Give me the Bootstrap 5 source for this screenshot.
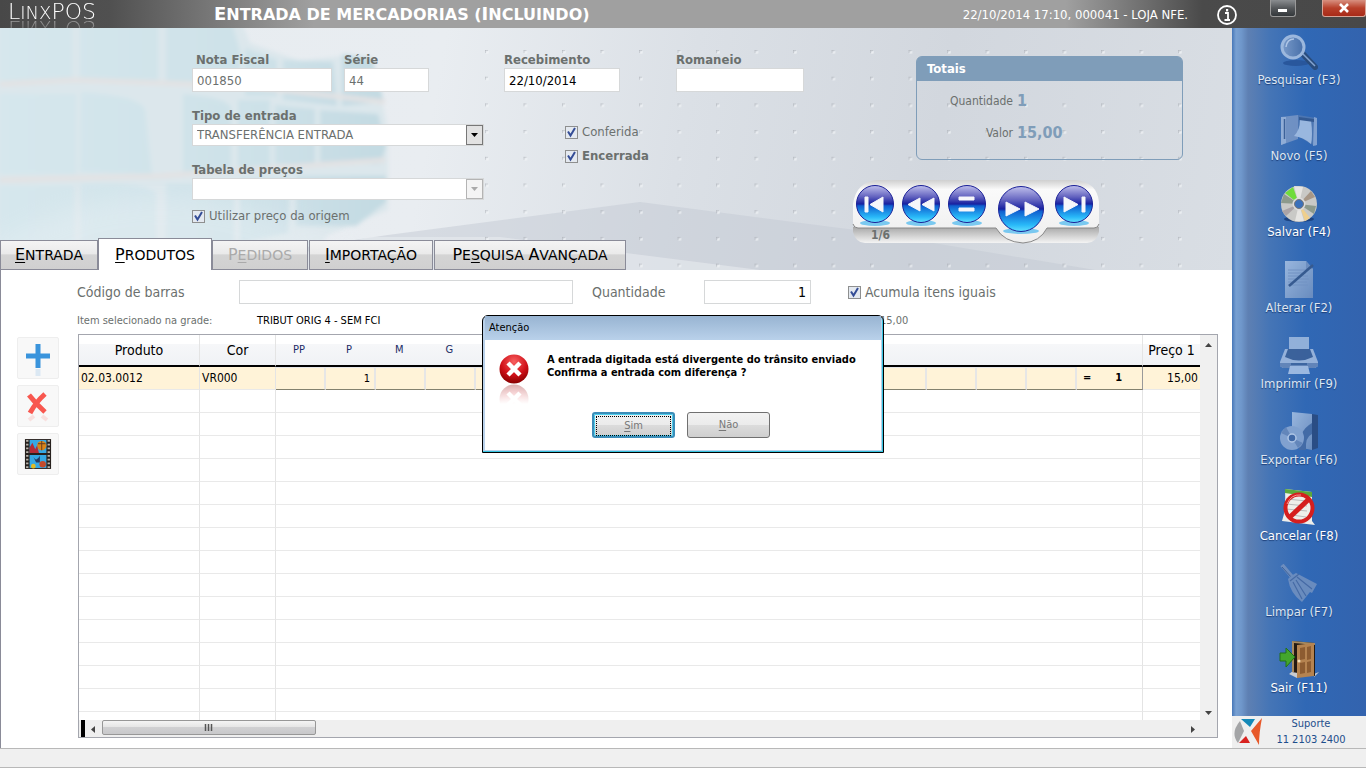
<!DOCTYPE html>
<html lang="pt-BR">
<head>
<meta charset="utf-8">
<meta name="viewport" content="width=device-width, initial-scale=1">
<title>LinxPOS - Entrada de mercadorias</title>
<link rel="stylesheet" href="https://cdn.jsdelivr.net/npm/bootstrap@5.3.0/dist/css/bootstrap.min.css">
<style>
  body{font-family:"DejaVu Sans Condensed","Noto Sans",sans-serif;font-size:13px;line-height:16px;color:#6b706e;background:#fff}
  button{font-family:inherit}
  .caps{font-family:"DejaVu Sans",sans-serif;text-transform:uppercase}
  .topbar{height:28px;color:#fff;background:linear-gradient(90deg,#484848 0,#505050 8%,#a0a0a0 23%,#a0a0a0 78%,#4a4a4a 88%,#484848 100%)}
  .brand{width:206px;padding-left:8px;height:28px;overflow:hidden}
  .brand .word{font-family:"DejaVu Sans",sans-serif;font-weight:200;font-size:18px;line-height:24px;height:22px;display:inline-block;-webkit-box-reflect:below -4px linear-gradient(transparent,rgba(255,255,255,.5))}
  .brand .word span{font-size:22px}
  .screen-title{font-size:16px;line-height:28px;font-weight:bold}
  .screen-title span{font-size:18px}
  .winbtn{height:17px;border:1px solid #999;border-top:0;border-radius:0 0 3px 3px;padding:0}
  .win-min{width:26px;background:linear-gradient(#8a8d90,#55585b 50%,#33373a)}
  .win-close{width:44px;margin-left:26px;background:linear-gradient(#d89080,#b8402a 50%,#a82a18);border-color:#d8a598}
  .head{background:linear-gradient(100deg,#e6ecf0 0,#e9edf1 35%,#dbe0e6 55%,#d2d7de 75%,#d9dee4 100%);min-height:242px;overflow:hidden}
  .head-art{position:absolute;inset:0;width:100%;height:100%}
  .head-form{padding:24px 49px 0 192px}
  .lbl{font-weight:bold;line-height:16px;display:block}
  .field{border:1px solid #d6d8d9;border-radius:0;background-color:#fff;height:24px;padding:0 4px;font-size:13px;color:#6b706e;display:block;min-width:0}
  .dark{color:#000}
  .w-292{width:292px}.w-140{width:140px}.w-85{width:85px}.w-116{width:116px}.w-128{width:128px}
  select.field{appearance:none;height:22px;width:100%;opacity:1;background-repeat:no-repeat;background-position:right 0 center;background-image:url("data:image/svg+xml,%3Csvg xmlns='http://www.w3.org/2000/svg' width='17' height='20'%3E%3Crect x='.5' y='.5' width='16' height='19' fill='%23e2e2e2' stroke='%23777'/%3E%3Cpath d='M5 8h7l-3.500 4z' fill='%23000'/%3E%3C/svg%3E")}
  select.field:disabled{background-image:url("data:image/svg+xml,%3Csvg xmlns='http://www.w3.org/2000/svg' width='17' height='20'%3E%3Crect x='.5' y='.5' width='16' height='19' fill='%23f4f4f4' stroke='%23b4b4b4'/%3E%3Cpath d='M5 8h7l-3.500 4z' fill='%23aaa'/%3E%3C/svg%3E")}
  .tick{appearance:none;width:13px;height:13px;margin:0;flex:none;border:1px solid #8e8f8f;background:#eef1f5}
  .tick:checked{background:#e4e9f0 url("data:image/svg+xml,%3Csvg xmlns='http://www.w3.org/2000/svg' viewBox='0 0 11 11'%3E%3Cpath d='M2 4.500l2.500 4L9 1' fill='none' stroke='%23344d96' stroke-width='2'/%3E%3C/svg%3E")}
  .flags{padding:32px 0 0 61px}
  .totals{width:267px;height:104px;border:1px solid #7f9db9;border-radius:6px}
  .totals h2{font-size:13px;line-height:24px;margin:0;padding-left:10px;background:#7f9db9;color:#fff;font-weight:bold;border-radius:4px 4px 0 0}
  .totals dt{font-weight:normal;font-size:12px;width:96px;text-align:right}
  .totals dd{margin:0;color:#7f9db9;font-weight:bold;font-size:16px}
  .player{width:246px;height:56px;margin:20px 84px 0 0}
  .player svg{overflow:visible}
  .player .pos{position:absolute;left:18px;top:47px;font-weight:bold;font-size:12px}
  .tabs{min-height:32px}
  .tabs button{border:1px solid #8a8b98;height:30px;padding:0;color:#000;font-size:14px;line-height:28px;text-transform:uppercase;background:linear-gradient(#f4f4f4,#eaeaea 45%,#d4d4d4 50%,#d0d0d0);margin-right:1px;white-space:nowrap}
  .tabs button.active{height:32px;border-bottom:0;background:#fff;margin:0}
  .tabs button:disabled{color:#aaa}
  .tabs .ini{font-size:16px}
  .tabs .t1{width:98px;margin:0}.tabs .t2{width:114px}.tabs .t3{width:96px}.tabs .t4{width:124px}.tabs .t5{width:192px}
  u{text-underline-offset:2px}
  .panel{border-left:1px solid #8a8b98;padding:10px 14px 10px 16px}
  .panel .big{font-size:14px;line-height:24px}
  .scan{padding-left:60px}
  .lab-cod{width:162px}
  .in-cod{flex:1 1 334px;max-width:334px}
  .lab-qtd{width:131px;padding-left:19px}
  .in-qtd{width:107px}
  .lab-acu{margin-left:37px}
  .itemrow{padding-left:60px;font-size:11px;line-height:14px;height:30px}
  .it-a{width:180px}
  .it-b{width:623px}
  .tools{width:42px;gap:6px;padding-top:3px}
  .tools button{width:42px;height:42px;border:1px solid #eee;background:#f8f8f8;padding:0;border-radius:2px}
  .gridbox{border:1px solid #a4a6ae;min-width:0;margin-left:19px}
  .gridrows{overflow:hidden;min-width:0;height:385px}
  .items{table-layout:fixed;width:100%;border-collapse:separate;border-spacing:0;color:#000}
  .items th{height:32px;font-weight:normal;text-align:center;padding:0;border-bottom:2px solid #000;background:linear-gradient(#fff 30%,#f6f7f9 31%,#f0f2f5);font-size:14px}
  .items th.sz{font-size:11px;color:#1c2c66;padding-right:4px}
  .items .rb{border-right:1px solid #e4e4e4}
  .items td{height:23px;padding:0 2px;border-bottom:1px solid #e9e9e9;line-height:20px;font-size:12px}
  .items .sel td{background:#fff3d8}
  .items .sel .sz{border:1px solid #e6e6e6;border-width:1px 2px 1px 0;border-bottom-color:#83816f;text-align:right;font-size:11px;padding-right:4px}
  .items .sel .tot{border-bottom-color:#83816f;border-right:1px solid #999;font-weight:bold;font-size:11px}
  .vbar{width:17px;background:#f0f0f0}
  .vbar,.hbar{flex:none}
  .hbar{height:17px;padding-left:2px;background:#efefef}
  .marker{width:4px}
  .bar-btn{border:0;background:none;padding:0;width:17px;height:17px;line-height:1}
  .thumb{width:214px;height:15px;border:1px solid #979797;border-radius:2px;background:linear-gradient(#f4f4f4,#e6e6e6 45%,#d0d0d2 50%,#c8c8ca);padding:0}
  .grow0{min-width:0}
  .side{width:134px;background:linear-gradient(90deg,#4777b8 0,#78a0d2 3%,#6f97cb 7%,#5e80b3 12%,#4575b6 28%,#3068b5 55%,#3363ae 100%);padding-top:4px}
  .side button{width:100%;height:76px;border:0;background:none;color:#fff;padding:0;line-height:18px;text-shadow:0 1px 1px #1c3e78;display:flex;flex-direction:column;align-items:center}
  .side svg{margin-bottom:1px}
  .side .off{color:#dde6f2}
  .side .off svg{opacity:.9}
  .support{height:32px;background:#efefef;color:#1e4e8c;font-size:11px;line-height:16px}
  .status{height:20px;background:#f0f0f0;border-top:1px solid #b8b8b8;border-bottom:1px solid #b8b8b8}
  .layer{position:fixed;inset:0;z-index:10}
  .msg{width:402px;height:138px;border:1px solid #000;border-radius:6px 6px 0 0;background:#b9d1ea;padding:0 2px 2px;color:#000;box-shadow:inset -1px -1px #35c3e0}
  .msg h1{font-size:11px;line-height:24px;margin:0;padding-left:4px;background:linear-gradient(#98b4d2,#b9d1ea);font-weight:normal}
  .msg p{font-size:11px;line-height:13px;font-weight:bold;margin:0}
  .msg-body{background:#fff;height:110px;padding:13px 14px 0 14px}
  .dlg{width:83px;height:26px;border:1px solid #707070;border-radius:3px;background:linear-gradient(#f2f2f2,#ebebeb 48%,#dcdcdc 50%,#cfcfcf);color:#777;font-size:11px;padding:2px}
  .dlg.first{border:2px solid #3c8db8;box-shadow:inset 0 0 0 1px #4fd0ee}
  .dlg.first span{display:block;border:1px dotted #000;line-height:18px}
</style>
</head>
<body class="d-flex flex-column min-vh-100">
<svg width="0" height="0" class="position-absolute" aria-hidden="true">
  <defs>
    <linearGradient id="orb" x2="0" y2="1"><stop offset="0" stop-color="#c0c0ec"/><stop offset=".3" stop-color="#6464c0"/><stop offset=".5" stop-color="#1820a0"/><stop offset=".55" stop-color="#1060d0"/><stop offset=".85" stop-color="#28b8f8"/><stop offset="1" stop-color="#60e0ff"/></linearGradient>
    <linearGradient id="pale" x2="1" y2="1"><stop offset="0" stop-color="#a3bee2"/><stop offset="1" stop-color="#6f90c0"/></linearGradient>
    <linearGradient id="deep" x2="1"><stop offset="0" stop-color="#7f9fcc"/><stop offset="1" stop-color="#4a70a8"/></linearGradient>
    <radialGradient id="red" cy=".25" r=".75"><stop offset="0" stop-color="#f86060"/><stop offset=".6" stop-color="#d01018"/><stop offset="1" stop-color="#800"/></radialGradient>
    <linearGradient id="fade" x2="0" y2="1"><stop offset="0" stop-color="#fff" stop-opacity=".2"/><stop offset="1" stop-color="#fff"/></linearGradient>
  </defs>
</svg>

<header class="topbar d-flex">
  <div class="brand"><span class="word caps"><span>L</span>inx<span>POS</span></span></div>
  <div class="screen-title caps px-2 flex-grow-1 text-nowrap"><span>E</span>ntrada de mercadorias (<span>I</span>ncluindo)</div>
  <div class="d-flex flex-shrink-0">
    <span class="pt-1 mt-1 me-4 lh-1">22/10/2014 17:10, 000041 - LOJA NFE.</span>
    <button type="button" class="btn p-0 border-0 lh-1 ms-1 me-4" aria-label="Informações"><svg class="d-block" width="22" height="26" viewBox="0 0 22 26"><circle cx="11" cy="14" r="9" fill="none" stroke="#fff" stroke-width="1.800"/><path d="M9 12h3v7M8.500 19h5.500" stroke="#fff" stroke-width="1.800" fill="none"/><rect x="10" y="8" width="2.200" height="2.400" fill="#fff"/></svg></button>
    <button type="button" class="winbtn win-min ms-2" aria-label="Minimizar"><svg class="d-block mx-auto" width="10" height="14"><rect y="8" width="9" height="3" fill="#fff"/></svg></button>
    <button type="button" class="winbtn win-close" aria-label="Fechar"><svg class="d-block mx-auto" width="12" height="14" viewBox="0 0 12 14"><path d="M2 3l8 8M10 3l-8 8" stroke="#fff" stroke-width="2.600"/></svg></button>
  </div>
</header>

<div class="d-flex flex-grow-1">
<main class="flex-grow-1 d-flex flex-column grow0">
  <section class="head position-relative d-flex flex-column">
    <svg class="head-art" viewBox="0 0 1232 242" preserveAspectRatio="none" aria-hidden="true">
      <defs>
        <pattern id="dots" x="485" y="22" width="38.500" height="26.700" patternUnits="userSpaceOnUse"><path d="M0 3V0h3" stroke="#b0b4ba" fill="none"/><path d="M1 3h2V1" stroke="#f3f5f7" fill="none"/></pattern>
        <linearGradient id="cube" x2="1"><stop offset="0" stop-color="#d6e7ed"/><stop offset=".7" stop-color="#cde1e8"/><stop offset="1" stop-color="#c3dae2"/></linearGradient>
        <filter id="soft"><feGaussianBlur stdDeviation="2"/></filter>
        <filter id="softer"><feGaussianBlur stdDeviation="12"/></filter>
      </defs>
      <g filter="url(#soft)">
        <path d="M-10-10H240l10 25 50 18 50-6 28 25 10 50v80l-60 25-30 40H-10z" fill="#dce7ec"/>
        <g fill="url(#cube)">
          <path d="M0-5h72v58H0zM80-5h78v62l-78-3zM166-5h66l8 28v32h-74zM245 20l32 12v36h-32zM283 32l50 2 4 44-54-6zM342 26l30 4 12 44-42 4z"/>
          <path d="M0 66h76v80H0zM81 64q60 4 64 18l7 64-72-2zM183 66q46 4 48 14v64h-48zM238 72h32v72h-32zM275 77l40 4v55h-40zM320 82l58 4 8 32-6 18h-60z"/>
          <path d="M0 158h74v86H0zM81 156q70-2 75 10v76H81zM166 156h68v58l-12 28h-56zM240 150h50l-2 55-48 10zM296 148h90v26l-30 24h-60z"/>
        </g>
        <path d="M0 56l75-4 170 6 140 16M0 152l160-4 225-16" stroke="#e3e2e3" stroke-width="5" fill="none"/>
      </g>
      <path d="M-20 225Q150 110 360 225L300 262H-20z" fill="#f2f5f8" opacity=".3" filter="url(#softer)"/>
      <path d="M300 220l88-13 252-33 215 28 240 40H280z" fill="#c3cad3" opacity=".5"/>
      <path d="M370 209h130l260 33H230z" fill="#e9edf1" opacity=".55"/>
      <rect x="480" y="18" width="715" height="224" fill="url(#dots)"/>
    </svg>
    <div class="head-form position-relative d-flex flex-grow-1">
      <div class="w-292 flex-shrink-0">
        <div class="d-flex gap-2">
          <div class="me-1"><label class="lbl ps-1" for="nf">Nota Fiscal</label><input id="nf" class="field w-140" value="001850"></div>
          <div><label class="lbl" for="serie">Série</label><input id="serie" class="field w-85" value="44"></div>
        </div>
        <label class="lbl pt-3" for="tipo">Tipo de entrada</label>
        <select id="tipo" class="field"><option>TRANSFERÊNCIA ENTRADA</option></select>
        <label class="lbl pt-3" for="tabela">Tabela de preços</label>
        <select id="tabela" class="field" disabled><option></option></select>
        <label class="d-flex align-items-center gap-1 pt-2"><input type="checkbox" class="tick" checked>Utilizar preço da origem</label>
      </div>
      <div class="ms-3 ps-1 flex-shrink-0">
        <div class="d-flex gap-5">
          <div class="me-2"><label class="lbl" for="receb">Recebimento</label><input id="receb" class="field w-116 dark" value="22/10/2014"></div>
          <div><label class="lbl" for="rom">Romaneio</label><input id="rom" class="field w-128"></div>
        </div>
        <div class="flags d-flex flex-column gap-2">
          <label class="d-flex align-items-center gap-1"><input type="checkbox" class="tick" checked>Conferida</label>
          <label class="d-flex align-items-center gap-1 fw-bold"><input type="checkbox" class="tick" checked>Encerrada</label>
        </div>
      </div>
      <div class="ms-auto d-flex flex-column align-items-end pt-1">
        <section class="totals">
          <h2>Totais</h2>
          <dl class="m-0 pt-2 mt-1">
            <div class="d-flex gap-1 mb-3"><dt>Quantidade</dt><dd>1</dd></div>
            <div class="d-flex gap-1"><dt>Valor</dt><dd>15,00</dd></div>
          </dl>
        </section>
        <nav class="player position-relative" aria-label="Navegação">
          <svg class="d-block" width="246" height="56" viewBox="0 0 246 56">
            <defs><linearGradient id="shell" x2="0" y2="1"><stop offset="0" stop-color="#cfcfcf"/><stop offset=".15" stop-color="#fafafa"/><stop offset="1" stop-color="#eee"/></linearGradient>
            <linearGradient id="tray" x2="0" y2="1"><stop offset="0" stop-color="#a8a8a8"/><stop offset="1" stop-color="#f4f4f4"/></linearGradient></defs>
            <path d="M0 47h246v5q-3 11-12 11H12Q3 63 0 52z" fill="url(#tray)"/>
            <path d="M24 0h198q22 2 24 22v20q0 6-5 6h-47q-7 14-24 15-19-1-27-15H5q-5 0-5-6V24Q3 2 24 0z" fill="url(#shell)"/>
            <path d="M0 44q1 4 5 4h138q8 14 27 15 17-1 24-15h47q4 0 5-4" fill="none" stroke="#888"/>
            <g fill="#48b8f0" opacity=".7"><ellipse cx="22" cy="43" rx="15" ry="3"/><ellipse cx="68" cy="43" rx="15" ry="3"/><ellipse cx="114" cy="43" rx="15" ry="3"/><ellipse cx="168" cy="51" rx="18" ry="3"/><ellipse cx="221" cy="43" rx="15" ry="3"/></g>
            <g fill="url(#orb)" stroke="#1a2098"><circle cx="22" cy="24" r="18.500"/><circle cx="68" cy="24" r="18.500"/><circle cx="114" cy="24" r="18.500"/><circle cx="168" cy="29" r="22.500"/><circle cx="221" cy="24" r="18.500"/></g>
            <g fill="#f6f6fa" stroke="#f6f6fa" stroke-linejoin="round"><path d="M12 17h3v15h-3zM30 17v15l-13-7.500zM67 18v13l-12-6.500zM81 18v13l-12-6.500zM106 17h15v3h-15zM106 28h15v3h-15zM153 22v14l14-7zM172 22v14l14-7zM211 17v15l14-7.500zM229 17h3v15h-3z"/></g>
          </svg>
          <span class="pos">1/6</span>
        </nav>
      </div>
    </div>
    <div class="tabs caps d-flex align-items-end position-relative">
      <button type="button" class="t1"><u class="ini">E</u>ntrada</button><button type="button" class="t2 active"><u class="ini">P</u>rodutos</button><button type="button" class="t3" disabled><span class="ini">P</span><u>e</u>didos</button><button type="button" class="t4"><u class="ini">I</u>mportação</button><button type="button" class="t5"><span class="ini">P</span>e<u>s</u>quisa <span class="ini">A</span>vançada</button>
    </div>
  </section>

  <section class="panel flex-grow-1 d-flex flex-column">
    <div class="scan big d-flex align-items-center">
      <label for="cod" class="lab-cod">Código de barras</label>
      <input id="cod" class="field big in-cod">
      <label for="qtd" class="lab-qtd">Quantidade</label>
      <input id="qtd" class="field big in-qtd dark text-end" value="1">
      <label class="lab-acu d-flex align-items-center gap-1"><input type="checkbox" class="tick" checked>Acumula itens iguais</label>
    </div>
    <div class="itemrow d-flex align-items-center pt-1">
      <span class="it-a">Item selecionado na grade:</span><span class="it-b dark">TRIBUT ORIG 4 - SEM FCI</span><span>15,00</span>
    </div>
    <div class="d-flex flex-grow-1">
      <div class="tools d-flex flex-column flex-shrink-0">
        <button type="button" aria-label="Adicionar"><svg width="34" height="36" viewBox="0 0 34 36"><path d="M17 4v24M5 16h24" stroke="#3a94dc" stroke-width="5"/><path d="M17 29v7" stroke="#3a94dc" stroke-width="5" opacity=".15"/></svg></button>
        <button type="button" aria-label="Excluir"><svg width="34" height="36" viewBox="0 0 34 36"><path d="M8 7q7 9 16 17M24 6q-9 8-15 19" stroke="#f8574f" stroke-width="5" fill="none"/><path d="M8 32l5-4M21 28l5 4" stroke="#f8574f" stroke-width="4" opacity=".15"/></svg></button>
        <button type="button" aria-label="Foto"><svg width="28" height="34" viewBox="0 0 30 36"><path d="M1 2h28v32H1z" fill="#27211e"/><path d="M3.500 3v30M26.500 3v30" stroke="#b9b4ac" stroke-width="2.500" stroke-dasharray="2 2"/><path d="M6 3h18v14H6zM6 19h18v14H6z" fill="#35a8e4"/><circle cx="19" cy="9" r="5" fill="#d98519"/><path d="M19 4v10M15 7h8" stroke="#613b23"/><path d="M6 17v-6l3-5 3 7 2-4 2 8z" fill="#b42c36"/><path d="M9 19q4 9 8 1v7h-4z" fill="#283b5f"/><circle cx="10" cy="31" r="2.500" fill="#e0bc25"/><circle cx="20" cy="29" r="3.500" fill="#c34b2c"/></svg></button>
      </div>
      <div class="gridbox flex-grow-1 d-flex flex-column">
        <div class="d-flex flex-grow-1 grow0">
          <div class="gridrows flex-grow-1">
            <table class="items">
              <colgroup id="cols"></colgroup>
              <thead><tr id="headrow"></tr></thead>
              <tbody id="rows"></tbody>
            </table>
          </div>
          <div class="vbar d-flex flex-column justify-content-between">
            <button class="bar-btn" type="button" aria-label="Subir"><svg width="9" height="9"><path d="M1 7h7L4.500 3z" fill="#444"/></svg></button>
            <button class="bar-btn" type="button" aria-label="Descer"><svg width="9" height="9"><path d="M1 3h7L4.500 7z" fill="#444"/></svg></button>
          </div>
        </div>
        <div class="hbar d-flex">
          <span class="marker bg-black"></span>
          <button class="bar-btn" type="button" aria-label="Esquerda"><svg width="9" height="9"><path d="M6 1v7L2 4.500z" fill="#444"/></svg></button>
          <button class="thumb" type="button" aria-label="Rolagem"><svg class="d-block mx-auto" width="10" height="8"><path d="M1.500 0v7M4.500 0v7M7.500 0v7" stroke="#555" stroke-width="1.500"/></svg></button>
          <button class="bar-btn ms-auto me-3" type="button" aria-label="Direita"><svg width="9" height="9"><path d="M3 1v7L7 4.500z" fill="#444"/></svg></button>
        </div>
      </div>
    </div>
  </section>
</main>

<aside class="side flex-shrink-0 d-flex flex-column">
  <button type="button" class="off"><svg width="40" height="38" viewBox="0 0 40 38"><ellipse cx="17" cy="31" rx="13" ry="3" fill="#28559a"/><path d="M24 22l12 13" stroke="#294a78" stroke-width="6" stroke-linecap="round"/><path d="M24 22l12 12" stroke="#8eaad2" stroke-width="1.500"/><circle cx="14" cy="15" r="11" fill="url(#deep)" stroke="#a7c0e2" stroke-width="3"/><path d="M7 15q1-8 8-8" stroke="#bcd0ec" stroke-width="1.500" fill="none"/></svg>Pesquisar (F3)</button>
  <button type="button" class="off"><svg width="38" height="38" viewBox="0 0 38 38"><path d="M1 9l17-2v24L1 37z" fill="#7695c5"/><path d="M1 9h5v26l-5 2z" fill="#9ab4da"/><path d="M18 7l18 3v28l-5-2-13-8z" fill="#5078b2"/><path d="M34 9l3 1v27l-4 1z" fill="#8aa8d4"/><path d="M20 12h11q2 16 0 24-8-7-17-8 6-6 6-16z" fill="#a5c0e4"/><path d="M4.500 11v20" stroke="#3e6197" stroke-width="1.500"/><path d="M19 9l15 2v3l-15-2z" fill="#35598f"/></svg>Novo (F5)</button>
  <button type="button"><svg width="38" height="38" viewBox="0 0 38 38"><ellipse cx="19" cy="35" rx="15" ry="3" fill="#1d4482"/><circle cx="19" cy="20" r="18" fill="#c9c9c6"/><path d="M19 20L5 9l8-6z" fill="#6fdc3c"/><path d="M19 20L1 19 4 10zM19 20l17 2-2 8z" fill="#8d9a8c"/><path d="M19 20L31 7l4 6z" fill="#a79787"/><path d="M19 20l4-17-9-1zM19 20l-4 17h9z" fill="#e6e5e2"/><path d="M19 20l11 14-5 3z" fill="#efcf8d"/><path d="M19 20L2 27l4 5z" fill="#aaa3a6"/><circle cx="19" cy="20" r="6.500" fill="#dcdcdc"/><circle cx="19" cy="20" r="4.500" fill="#3b70ba" stroke="#777"/></svg>Salvar (F4)</button>
  <button type="button" class="off"><svg width="30" height="38" viewBox="0 0 30 38"><path d="M1 1h21l7 8v29H1z" fill="url(#pale)"/><path d="M22 1v8h7" fill="#7393c2"/><path d="M4 10h20M4 13h18M4 16h20M4 19h21M4 22h19M4 25h20" stroke="#7896c4"/><path d="M5 26L29 5" stroke="#37598c" stroke-width="2.500"/></svg>Alterar (F2)</button>
  <button type="button" class="off"><svg width="40" height="38" viewBox="0 0 40 38"><path d="M10 1h20v16H10z" fill="#9cb8de"/><path d="M6 13h28l5 13v4l-3 2H4l-3-2v-4z" fill="#9fb9de"/><path d="M9 13h22l3 8q-14 7-28 0z" fill="#3c6199"/><path d="M1 27h38v3l-3 2H4l-3-2z" fill="#6788ba"/><path d="M11 30h18l2 8H9z" fill="#a7c1e5"/><path d="M12 28h16" stroke="#3f669f" stroke-width="2"/></svg>Imprimir (F9)</button>
  <button type="button" class="off"><svg width="40" height="38" viewBox="0 0 40 38"><path d="M13 0l20 2v36l-20-4z" fill="url(#pale)"/><path d="M33 2l6 1v33l-6 2z" fill="#2a4b80"/><path d="M20 38Q19 19 33 11v11q-7 3-6 16z" fill="#466ca5"/><circle cx="13" cy="26" r="12" fill="#89a7d2"/><path d="M13 26L2 21l5-6zM13 26l6 10 5-5z" fill="#6889bb"/><circle cx="13" cy="26" r="4" fill="#4169a6" stroke="#bbcfeb" stroke-width="1.500"/></svg>Exportar (F6)</button>
  <button type="button"><svg width="38" height="38" viewBox="0 0 38 38"><path d="M5 1l27 3v29l3 4L2 33q4-10 3-32z" fill="#eeeeea"/><path d="M5 1l27 3v5L5 5z" fill="#5ca83c"/><path d="M6 11l21 2M6 16l21 2M6 21l21 2M5 26l21 3" stroke="#bbb"/><circle cx="19" cy="20" r="13.500" fill="none" stroke="#d51e1e" stroke-width="4"/><path d="M10 29L29 11" stroke="#d51e1e" stroke-width="5"/><path d="M7 16q4-10 14-9" stroke="#f79a91" fill="none"/></svg>Cancelar (F8)</button>
  <button type="button" class="off"><svg width="38" height="38" viewBox="0 0 38 38"><path d="M2 1l11 13" stroke="#7391bf" stroke-width="4"/><path d="M2 3l10 11" stroke="#3d5f95"/><path d="M11 12l5-3 21 11-5 9-2-1-8 10Q10 29 8 15z" fill="#7090c0"/><path d="M10 17l9-7M13 18l9 17M16 16l10 16M17 13l15 12" stroke="#486ba3" stroke-width="1.200"/></svg>Limpar (F7)</button>
  <button type="button"><svg width="40" height="38" viewBox="0 0 40 38"><path d="M10 34l8-6v10zM35 34l5-2-5 5z" fill="#c9cbd0"/><path d="M13 1l23 2v33l-23-4z" fill="#241a12"/><path d="M13 1l23 2v2L15 3v29h-2z" fill="#a88a60"/><path d="M18 5l17-2v33l-17 2z" fill="#b58350"/><path d="M21 8l5-1v12l-5 1zM28 7l4-1v13l-4 1zM21 23l5-1v11l-5 1zM28 22l4-1v11l-4 1z" fill="#8d5c31"/><circle cx="20" cy="21" r="1.500" fill="#f4e3bd"/><path d="M1 13h6V8l9 9-9 10v-6H1z" fill="#43a62c" stroke="#237116"/></svg>Sair (F11)</button>
  <div class="support d-flex mt-auto">
    <svg class="flex-shrink-0" width="32" height="32" viewBox="0 0 32 32"><path d="M9 3h14l-5 8z" fill="#1489b8"/><path d="M30 2L19 15l8 14q0-12 3-27z" fill="#e7592a"/><path d="M8 5Q-2 17 6 27l6-12z" fill="#a4a5a7"/><path d="M7 27l7-7 4 7z" fill="#d8221f"/></svg>
    <div class="flex-grow-1 text-center pe-2">Suporte<br>11 2103 2400</div>
  </div>
</aside>
</div>
<footer class="status"></footer>

<div class="layer d-flex align-items-center justify-content-center">
  <div class="msg" role="alertdialog" aria-labelledby="dlg-title">
    <h1 id="dlg-title">Atenção</h1>
    <div class="msg-body">
      <div class="d-flex gap-3">
        <svg class="flex-shrink-0" width="32" height="51" viewBox="0 0 32 51"><g id="err"><circle cx="15" cy="16" r="14.500" fill="url(#red)"/><path d="M9 10l12 12M21 10L9 22" stroke="#fff" stroke-width="4.500"/></g><use href="#err" transform="matrix(1 0 0 -1 0 62)" opacity=".4"/><path d="M0 31h32v20H0z" fill="url(#fade)"/></svg>
        <p>A entrada digitada está divergente do trânsito enviado<br>Confirma a entrada com diferença ?</p>
      </div>
      <div class="d-flex justify-content-center gap-2 mt-2 pe-1">
        <button type="button" class="dlg first me-1"><span><u>S</u>im</span></button>
        <button type="button" class="dlg"><u>N</u>ão</button>
      </div>
    </div>
  </div>
</div>

<script>
  const sizes = ['PP', 'P', 'M', 'G', '', '', '', '', '', '', '', '', '', '', '', ''];
  document.getElementById('cols').innerHTML =
    '<col style="width:121px"><col style="width:76px">' + sizes.map(() => '<col>').join('') + '<col style="width:66px"><col style="width:57px">';
  document.getElementById('headrow').innerHTML =
    '<th class="rb">Produto</th><th class="rb">Cor</th>' + sizes.map(s => `<th class="sz">${s}</th>`).join('') + '<th class="rb"></th><th>Preço 1</th>';
  let html = '<tr class="sel"><td class="rb">02.03.0012</td><td class="rb">VR000</td>' +
    sizes.map((s, i) => `<td class="sz">${i === 1 ? '1' : ''}</td>`).join('') +
    '<td class="tot"><span class="d-flex px-1"><span>=</span><span class="ps-4">1</span></span></td><td class="text-end">15,00</td></tr>';
  for (let i = 0; i < 15; i++) html += '<tr><td class="rb"></td><td class="rb"></td><td class="rb" colspan="17"></td><td></td></tr>';
  document.getElementById('rows').innerHTML = html;
</script>
<script src="https://cdn.jsdelivr.net/npm/bootstrap@5.3.0/dist/js/bootstrap.bundle.min.js"></script>
</body>
</html>
